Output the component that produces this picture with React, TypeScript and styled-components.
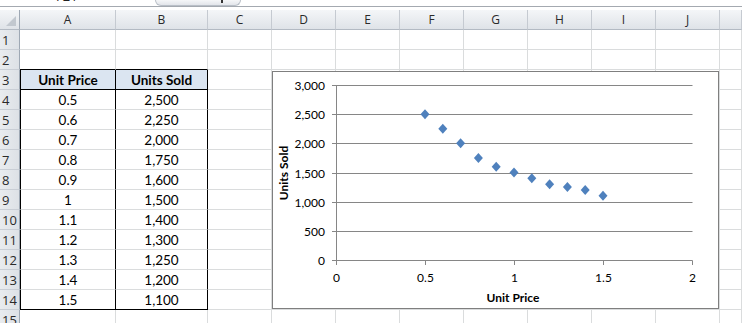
import React from 'react';
import styled, { createGlobalStyle } from 'styled-components';

const GlobalStyle = createGlobalStyle`
  html, body { margin: 0; padding: 0; background: #fff; overflow: hidden; }
  body { font-family: Lato, "Liberation Sans", sans-serif; color: #000; }
`;

const COLS = '20px 96px 92px repeat(8, 64px) 1fr';
const GRID = '#dadcdd';
const DARK = '#000000';

const Page = styled.div`
  width: 742px;
  height: 323px;
  overflow: hidden;
  background: #fff;
`;

const TopStrip = styled.div`
  height: 7px;
  box-sizing: border-box;
  display: flex;
  border-bottom: 1px solid #a4a9b0;
  margin-bottom: 3px;
`;

const NameBox = styled.div`
  width: 155px;
  height: 6px;
  overflow: hidden;
`;

const NameText = styled.div`
  margin-top: -10px;
  padding-left: 56px;
  font-family: "Open Sans", sans-serif;
  font-size: 13px;
  line-height: 13px;
  color: #222;
`;

const FxBox = styled.div`
  width: 86px;
  height: 6px;
  box-sizing: border-box;
  border: 1px solid #b9bfc7;
  border-top: none;
  border-radius: 0 0 7px 7px;
  background: linear-gradient(#f5f6f8, #e2e5ea);
  display: flex;
  justify-content: flex-end;
  padding-right: 17px;
`;

const FxMark = styled.div`
  width: 2px;
  height: 3px;
  background: #333;
`;

const Sheet = styled.div`
  position: relative;
`;

const GridRow = styled.div`
  display: grid;
  grid-template-columns: ${COLS};
  height: 20px;
`;

const ColHeader = styled.div`
  box-sizing: border-box;
  background: linear-gradient(#f4f6f8, #dfe3e8);
  border-right: 1px solid #c5cad1;
  border-bottom: 1px solid #b3bac3;
  text-align: center;
  font-family: "Open Sans", sans-serif;
  font-size: 12px;
  line-height: 19px;
  color: #2a2a2a;
`;

const Corner = styled(ColHeader)`
  position: relative;
  border-right-color: #9ea8b4;
  &::after {
    content: '';
    position: absolute;
    right: 3px;
    bottom: 3px;
    width: 0;
    height: 0;
    border-left: 10px solid transparent;
    border-bottom: 10px solid #c2c8cf;
  }
`;

const RowHeader = styled.div`
  box-sizing: border-box;
  background: linear-gradient(90deg, #e9ecef, #dde1e6);
  border-right: 1px solid #9ea8b4;
  border-bottom: 1px solid #c9ced5;
  padding-left: 2px;
  font-family: "Open Sans", sans-serif;
  font-size: 13px;
  line-height: 20px;
  color: #2a2a2a;
  white-space: nowrap;
  overflow: hidden;
`;

type CellProps = { $fill?: boolean; $bold?: boolean; $r?: boolean; $b?: boolean; $l?: boolean };

const Cell = styled.div<CellProps>`
  box-sizing: border-box;
  border-left: ${(p) => (p.$l ? `1px solid ${DARK}` : 'none')};
  border-right: 1px solid ${(p) => (p.$r ? DARK : GRID)};
  border-bottom: 1px solid ${(p) => (p.$b ? DARK : GRID)};
  background: ${(p) => (p.$fill ? '#dbe5f1' : '#fff')};
  text-align: center;
  font-size: 13.5px;
  line-height: 20px;
  font-weight: ${(p) => (p.$bold ? 700 : 400)};
  white-space: nowrap;
  overflow: hidden;
`;

const ChartBox = styled.div`
  position: absolute;
  left: 272px;
  top: 61px;
  width: 447px;
  height: 238px;
  box-sizing: border-box;
  border: 1px solid #7f7f7f;
  background: #fff;
`;

const ChartSvg = styled.svg`
  display: block;
  font-family: Lato, "Liberation Sans", sans-serif;
`;

const letters = ['A', 'B', 'C', 'D', 'E', 'F', 'G', 'H', 'I', 'J', ''];

const data: [string, string][] = [
  ['0.5', '2,500'],
  ['0.6', '2,250'],
  ['0.7', '2,000'],
  ['0.8', '1,750'],
  ['0.9', '1,600'],
  ['1', '1,500'],
  ['1.1', '1,400'],
  ['1.2', '1,300'],
  ['1.3', '1,250'],
  ['1.4', '1,200'],
  ['1.5', '1,100'],
];

const points: [number, number][] = [
  [0.5, 2500], [0.6, 2250], [0.7, 2000], [0.8, 1750], [0.9, 1600], [1, 1500],
  [1.1, 1400], [1.2, 1300], [1.3, 1250], [1.4, 1200], [1.5, 1100],
];

const X0 = 63;
const XS = 178;
const Y0 = 188;
const YS = 175 / 3000;
const px = (v: number) => X0 + v * XS;
const py = (u: number) => Y0 - u * YS;

function Chart() {
  const yTicks = [0, 500, 1000, 1500, 2000, 2500, 3000];
  const xTicks = [0, 0.5, 1, 1.5, 2];
  return (
    <ChartBox>
      <ChartSvg width={445} height={236}>
        {yTicks.map((t) => {
          const y = Math.round(py(t)) + 0.5;
          return (
            <g key={t}>
              <line x1={X0 - 4} x2={px(2) + 0.5} y1={y} y2={y} stroke="#868686" strokeWidth={1} />
              <text x={52} y={y + 4} fontSize={12} textAnchor="end" fill="#000">
                {t.toLocaleString('en-US')}
              </text>
            </g>
          );
        })}
        <line x1={X0 + 0.5} x2={X0 + 0.5} y1={Math.round(py(3000))} y2={Y0 + 0.5} stroke="#868686" />
        {xTicks.map((t) => {
          const x = Math.round(px(t)) + 0.5;
          return (
            <g key={t}>
              <line x1={x} x2={x} y1={Y0 + 0.5} y2={Y0 + 5} stroke="#868686" />
              <text x={x} y={210} fontSize={12} textAnchor="middle" fill="#000">
                {String(t)}
              </text>
            </g>
          );
        })}
        <text x={240} y={230} fontSize={12} fontWeight={700} textAnchor="middle" fill="#000">
          Unit Price
        </text>
        <text
          x={0}
          y={0}
          fontSize={12}
          fontWeight={700}
          textAnchor="middle"
          fill="#000"
          transform="translate(15 101) rotate(-90)"
        >
          Units Sold
        </text>
        {points.map(([v, u]) => {
          const cx = px(v);
          const cy = py(u);
          return (
            <polygon
              key={v}
              points={`${cx},${cy - 5} ${cx + 4.5},${cy} ${cx},${cy + 5} ${cx - 4.5},${cy}`}
              fill="#4f81bd"
            />
          );
        })}
      </ChartSvg>
    </ChartBox>
  );
}

export default function App() {
  const rows = Array.from({ length: 15 }, (_, i) => i + 1);
  return (
    <Page>
      <GlobalStyle />
      <TopStrip>
        <NameBox>
          <NameText>F21</NameText>
        </NameBox>
        <FxBox>
          <FxMark />
        </FxBox>
      </TopStrip>
      <Sheet>
        <GridRow>
          <Corner />
          {letters.map((l, i) => (
            <ColHeader key={i}>{l}</ColHeader>
          ))}
        </GridRow>
        {rows.map((r) => {
          const inTable = r >= 3 && r <= 14;
          const isHead = r === 3;
          const bDark = r === 2 || r === 3 || r === 14;
          const d = r >= 4 && r <= 14 ? data[r - 4] : null;
          return (
            <GridRow key={r}>
              <RowHeader>{r}</RowHeader>
              <Cell $l={inTable} $r={inTable} $b={bDark} $fill={isHead} $bold={isHead}>
                {isHead ? 'Unit Price' : d ? d[0] : ''}
              </Cell>
              <Cell $r={inTable} $b={bDark} $fill={isHead} $bold={isHead}>
                {isHead ? 'Units Sold' : d ? d[1] : ''}
              </Cell>
              {letters.slice(2).map((l, i) => (
                <Cell key={i} />
              ))}
            </GridRow>
          );
        })}
        <Chart />
      </Sheet>
    </Page>
  );
}
